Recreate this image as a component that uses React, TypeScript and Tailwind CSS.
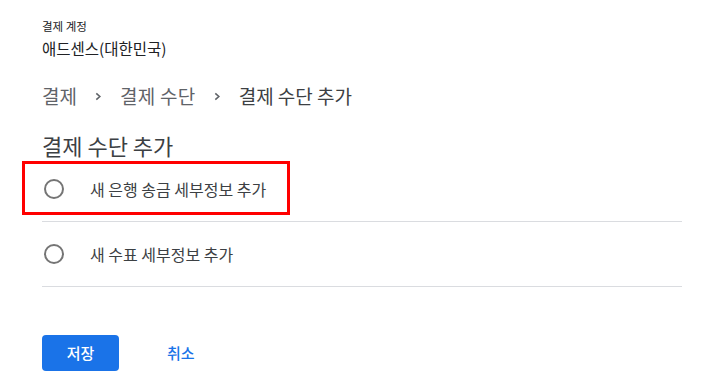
const font = { fontFamily: '"Noto Sans CJK KR", "Noto Sans", sans-serif' };

function Radio() {
  return <span className="block w-5 h-5 rounded-full border-2 border-[#757575] shrink-0" />;
}

function Chevron() {
  return (
    <svg viewBox="0 0 8 10" className="w-[7px] h-[9px] mx-[18px]" fill="none" stroke="#5f6368" strokeWidth="1.8">
      <path d="M1.5 1.5 L5.5 5 L1.5 8.5" />
    </svg>
  );
}

function Option({ label, highlighted }: { label: string; highlighted?: boolean }) {
  return (
    <div className="relative flex items-center h-[65px] border-b border-[#dadce0]">
      <div className="w-5 ml-[2px]">
        <Radio />
      </div>
      <span className="ml-[26px] text-[16px] text-[#3c4043]">{label}</span>
      {highlighted && (
        <div className="absolute left-[-20px] top-[4px] w-[268px] h-[54px] border-[3px] border-[#ff0000]" />
      )}
    </div>
  );
}

export default function App() {
  return (
    <div className="w-[717px] h-[389px] bg-white pl-[42px] pr-[35px] pt-[18px]" style={font}>
      <div className="text-[11.5px] leading-[17px] text-[#202124]">결제 계정</div>
      <div className="mt-[3px] text-[15.5px] leading-[20px] text-[#202124]">애드센스(대한민국)</div>

      <div className="mt-[26px] flex items-center text-[19px] leading-[24px] text-[#5f6368]">
        <span>결제</span>
        <Chevron />
        <span className="tracking-[0.3px]">결제 수단</span>
        <Chevron />
        <span className="text-[#3c4043]">결제 수단 추가</span>
      </div>

      <h1 className="mt-[25px] text-[22px] leading-[24px] text-[#3c4043]">결제 수단 추가</h1>

      <div>
        <Option label="새 은행 송금 세부정보 추가" highlighted />
        <Option label="새 수표 세부정보 추가" />
      </div>

      <div className="mt-[48px] flex items-center">
        <button className="w-[77px] h-9 rounded bg-[#1a73e8] text-white text-[15px] font-medium">저장</button>
        <button className="ml-[48px] text-[15px] font-medium text-[#1a73e8]">취소</button>
      </div>
    </div>
  );
}
